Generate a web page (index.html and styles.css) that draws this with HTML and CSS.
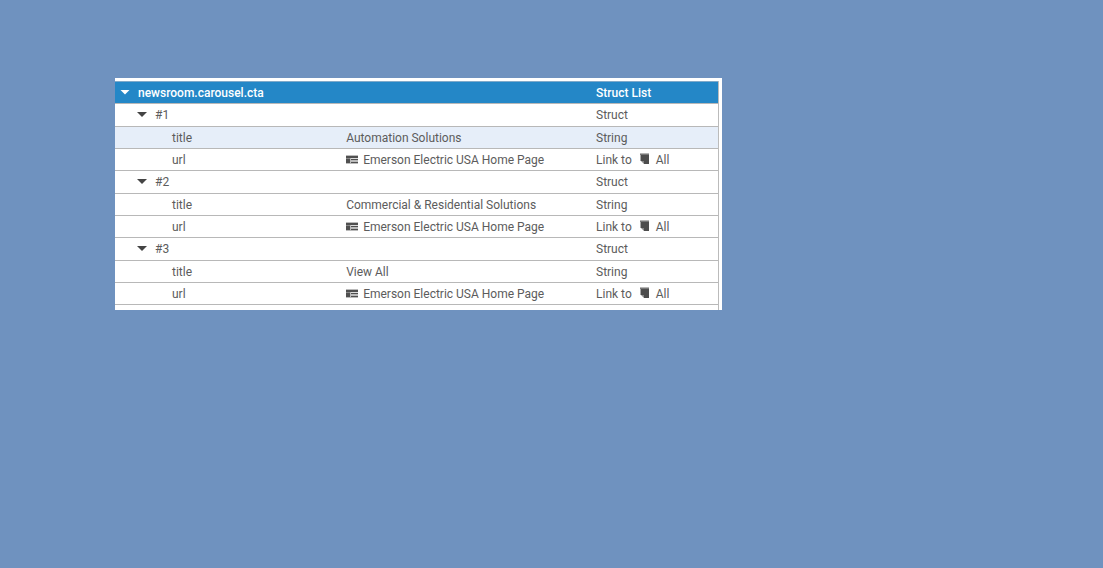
FILE: index.html
```html
<!DOCTYPE html>
<html lang="en">
<head>
<meta charset="utf-8">
<title>newsroom.carousel.cta</title>
<link rel="stylesheet" href="styles.css">
</head>
<body>
<svg class="symbols" aria-hidden="true">
  <symbol id="page" viewBox="0 0 12 9">
    <path fill="#bbb" d="M0 0h12v9H0z"/>
    <path fill="#505050" d="M0 1h12v2H0zM0 3h4v5H0zM5 4h7v1H5zM5 7h7v1H5z"/>
    <path fill="#888" d="M0 3h4v1H0z"/>
    <path fill="#ddd" d="M5 3h7v1H5z"/>
  </symbol>
  <symbol id="doc" viewBox="0 0 9 11">
    <path fill="#b5b5b5" d="M0 0h9v1H0z"/>
    <path fill="#777" d="M0 1h9v1H0z"/>
    <path fill="#4d4d4d" d="M1 2h8v9H4V8H1z"/>
    <path fill="#aaa" d="M0 2h1v6H0z"/>
    <path fill="#888" d="M1 8h3v3z"/>
  </symbol>
</svg>
<main class="panel">
  <div class="frame">
  <table class="tree">
    <colgroup><col class="col-name"><col class="col-value"><col class="col-type"></colgroup>
    <thead>
      <tr class="root"><th class="level-0"><button class="toggle" aria-label="Collapse newsroom.carousel.cta"></button>newsroom.carousel.cta</th><th></th><th>Struct List</th></tr>
    </thead>
    <tbody>
      <tr class="group"><td class="level-1"><button class="toggle" aria-label="Collapse #1"></button>#1</td><td></td><td>Struct</td></tr>
      <tr class="selected"><td class="level-2">title</td><td class="value">Automation Solutions</td><td>String</td></tr>
      <tr><td class="level-2">url</td><td class="value"><svg class="page-icon"><use href="#page"/></svg>Emerson Electric USA Home Page</td><td>Link to<svg class="doc-icon"><use href="#doc"/></svg>All</td></tr>
      <tr class="group"><td class="level-1"><button class="toggle" aria-label="Collapse #2"></button>#2</td><td></td><td>Struct</td></tr>
      <tr><td class="level-2">title</td><td class="value">Commercial &amp; Residential Solutions</td><td>String</td></tr>
      <tr><td class="level-2">url</td><td class="value"><svg class="page-icon"><use href="#page"/></svg>Emerson Electric USA Home Page</td><td>Link to<svg class="doc-icon"><use href="#doc"/></svg>All</td></tr>
      <tr class="group"><td class="level-1"><button class="toggle" aria-label="Collapse #3"></button>#3</td><td></td><td>Struct</td></tr>
      <tr><td class="level-2">title</td><td class="value">View All</td><td>String</td></tr>
      <tr><td class="level-2">url</td><td class="value"><svg class="page-icon"><use href="#page"/></svg>Emerson Electric USA Home Page</td><td>Link to<svg class="doc-icon"><use href="#doc"/></svg>All</td></tr>
    </tbody>
  </table>
  </div>
</main>
</body>
</html>
```
FILE: styles.css
```css
body {
  margin: 0;
  padding: 78px 115px;
  background: #6f92bf;
  color: #5c5c5c;
  font: 12px/20px Roboto, sans-serif;
}
.symbols {
  display: none;
}
.panel {
  box-sizing: border-box;
  max-width: 607px;
  padding: 3px 3px 0 0;
  background: #fff;
}
.frame {
  padding-bottom: 5px;
  border-right: 1px solid #bbb;
}
.tree {
  width: 100%;
  table-layout: fixed;
  border-collapse: separate;
  border-spacing: 0;
}
.col-name {
  width: 38%;
}
.col-type {
  width: 122px;
}
.tree th,
.tree td {
  box-sizing: border-box;
  height: 22px;
  padding: 0;
  border-bottom: 1px solid #b8b8b8;
  text-align: left;
  white-space: nowrap;
}
.tree .root th,
.tree .group td {
  height: 23px;
}
.tree .root th {
  border-top: 1px solid #7fa9c9;
  background: #2487c7;
  color: #fff;
  font-weight: 500;
}
.selected td {
  background: #e6eef9;
}
.tree .level-0 {
  padding-left: 5px;
}
.tree .level-1 {
  padding-left: 22px;
}
.tree .level-2 {
  padding-left: 57px;
}
.tree .value {
  padding-left: 2px;
}
.toggle {
  width: 10px;
  height: 5px;
  margin: 0 8px 0 0;
  padding: 0;
  border: 0;
  background: #444;
  clip-path: polygon(0 0, 100% 0, 50% 100%);
  vertical-align: 2px;
}
.root .toggle {
  background: #fff;
}
.page-icon {
  width: 12px;
  height: 9px;
  margin-right: 5px;
}
.doc-icon {
  width: 9px;
  height: 11px;
  margin: 0 7px 0 8px;
}
```
